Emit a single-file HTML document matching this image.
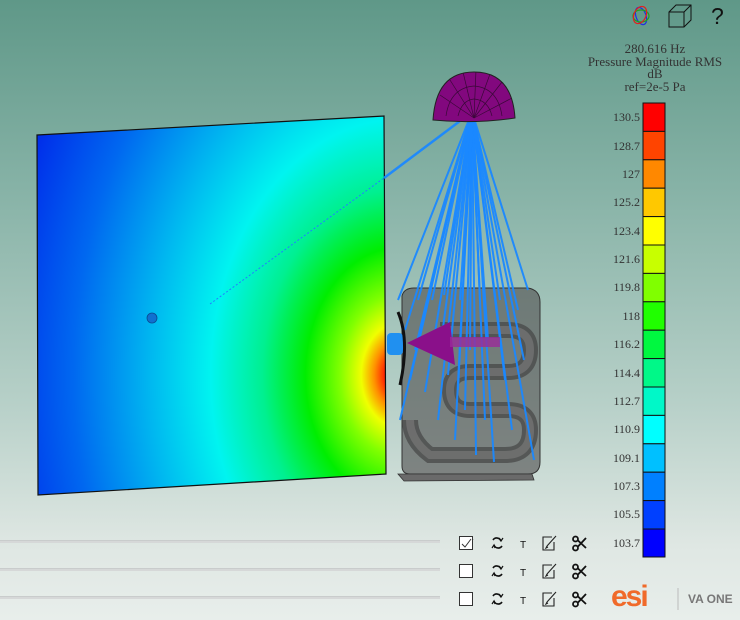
<!DOCTYPE html>
<html><head><meta charset="utf-8"><style>
html,body{margin:0;padding:0}
body{width:740px;height:620px;overflow:hidden;position:relative;font-family:"Liberation Serif",serif;
background:linear-gradient(180deg,#5f9888 0%,#86b2a6 30%,#b7d0c8 65%,#dfe7e3 88%,#e8eeeb 100%);}
.lbl{position:absolute;right:100px;font-size:12px;color:#333;text-align:right;width:60px}
.hdr{position:absolute;left:580px;width:150px;text-align:center;font-size:13px;line-height:12.5px;color:#333;top:43px}
.rowline{position:absolute;left:0;width:440px;height:2px;background:#d6d8d8;border-top:1px solid #c9cccc}
.ic{position:absolute;font-family:"DejaVu Sans",sans-serif;color:#111}
.cb{position:absolute;width:12px;height:12px;border:1px solid #333;background:#fff;left:459px}
</style></head><body>
<svg width="740" height="620" style="position:absolute;left:0;top:0">
<defs>
<radialGradient id="rg" gradientUnits="userSpaceOnUse" cx="400" cy="375" r="430" gradientTransform="translate(400 375) scale(1 1.35) translate(-400 -375)">
<stop offset="0" stop-color="#ff0000"/><stop offset="0.035" stop-color="#ff2000"/><stop offset="0.06" stop-color="#ff9000"/>
<stop offset="0.09" stop-color="#f0ff00"/><stop offset="0.14" stop-color="#80ff00"/><stop offset="0.22" stop-color="#00ee00"/>
<stop offset="0.32" stop-color="#00f090"/><stop offset="0.44" stop-color="#00f4f0"/><stop offset="0.58" stop-color="#00b8f0"/>
<stop offset="0.76" stop-color="#0068f0"/><stop offset="1" stop-color="#0018e8"/></radialGradient>
<clipPath id="hc"><path d="M433 120 Q436 72 474 72 Q512 72 515 118 Z"/></clipPath>
</defs>
<polygon points="37,135 384,116 386,474 38,495" fill="url(#rg)" stroke="#111" stroke-width="1.2"/>
<circle cx="152" cy="318" r="5" fill="#1070d0" stroke="#0a4a90" stroke-width="0.8"/>
<line x1="210" y1="304" x2="384" y2="178" stroke="#2080ff" stroke-width="1" stroke-dasharray="2,2"/>
<path d="M402 296 Q404 288 414 288 L528 288 Q540 290 540 302 L540 462 Q540 474 528 474 L410 474 Q402 474 402 466 Z" fill="rgba(85,85,85,0.65)" stroke="#333" stroke-width="1"/>
<path d="M398 474 L532 474 L534 480 L404 481 Z" fill="#6a6a6a" stroke="#333" stroke-width="0.8"/>
<path d="M440 330 L508 330 Q530 330 530 350 Q530 372 508 372 L470 372 Q450 372 450 390 Q450 410 470 410 L508 410 Q530 410 530 430 Q530 455 505 455 L430 455 Q410 440 410 420" fill="none" stroke="#444" stroke-width="16" stroke-opacity="0.7"/>
<path d="M440 330 L508 330 Q530 330 530 350 Q530 372 508 372 L470 372 Q450 372 450 390 Q450 410 470 410 L508 410 Q530 410 530 430 Q530 455 505 455 L430 455 Q410 440 410 420" fill="none" stroke="#777" stroke-width="8" stroke-opacity="0.7"/>
<g stroke="#1a88ff" stroke-width="2" stroke-opacity="0.95">
<line x1="472" y1="112" x2="384" y2="178" stroke-width="2.5"/>
<line x1="472" y1="112" x2="398" y2="300"/><line x1="472" y1="112" x2="405" y2="330"/>
<line x1="472" y1="112" x2="410" y2="380"/><line x1="472" y1="112" x2="418" y2="300"/>
<line x1="472" y1="112" x2="425" y2="392"/><line x1="472" y1="112" x2="432" y2="300"/>
<line x1="472" y1="112" x2="438" y2="420"/><line x1="472" y1="112" x2="444" y2="295"/>
<line x1="472" y1="112" x2="448" y2="375"/><line x1="472" y1="112" x2="455" y2="440"/>
<line x1="472" y1="112" x2="460" y2="300"/><line x1="472" y1="112" x2="465" y2="410"/>
<line x1="472" y1="112" x2="470" y2="350"/><line x1="472" y1="112" x2="476" y2="455"/>
<line x1="472" y1="112" x2="480" y2="300"/><line x1="472" y1="112" x2="485" y2="420"/>
<line x1="472" y1="112" x2="488" y2="340"/><line x1="472" y1="112" x2="494" y2="462"/>
<line x1="472" y1="112" x2="500" y2="300"/><line x1="472" y1="112" x2="505" y2="380"/>
<line x1="472" y1="112" x2="512" y2="430"/><line x1="472" y1="112" x2="518" y2="310"/>
<line x1="472" y1="112" x2="524" y2="360"/><line x1="472" y1="112" x2="528" y2="290"/>
<line x1="472" y1="112" x2="534" y2="460"/><line x1="472" y1="112" x2="400" y2="420"/>
<line x1="472" y1="112" x2="415" y2="350"/><line x1="472" y1="112" x2="440" y2="350"/>
<line x1="472" y1="112" x2="458" y2="390"/>
</g>
<polygon points="407,343 450,322 455,365" fill="#8a108a"/>
<rect x="450" y="337" width="50" height="10" fill="#9a2a9a" opacity="0.8"/>
<rect x="387" y="333" width="16" height="22" rx="4" fill="#2090f0"/>
<path d="M398 312 Q410 340 400 385" stroke="#111" stroke-width="3" fill="none"/>
<path d="M433 120 Q436 72 474 72 Q512 72 515 118 Q474 124 433 120 Z" fill="#82087e" stroke="#222" stroke-width="1"/>
<g clip-path="url(#hc)" stroke="#3a0838" stroke-width="0.7" fill="none">
<path d="M446 116 Q450 88 474 86 Q498 88 502 116"/><path d="M458 116 Q462 100 474 99 Q488 100 492 116"/>
<line x1="474" y1="118" x2="440" y2="95"/><line x1="474" y1="118" x2="450" y2="80"/><line x1="474" y1="118" x2="463" y2="72"/>
<line x1="474" y1="118" x2="476" y2="70"/><line x1="474" y1="118" x2="490" y2="74"/><line x1="474" y1="118" x2="502" y2="82"/>
<line x1="474" y1="118" x2="512" y2="98"/>
</g>
<g stroke="#111" stroke-width="1">
<rect x="643" y="103" width="22" height="28.4" fill="#ff0000"/><rect x="643" y="131.4" width="22" height="28.4" fill="#ff4400"/>
<rect x="643" y="159.8" width="22" height="28.4" fill="#ff8800"/><rect x="643" y="188.2" width="22" height="28.4" fill="#ffc800"/>
<rect x="643" y="216.6" width="22" height="28.4" fill="#ffff00"/><rect x="643" y="245" width="22" height="28.4" fill="#c8ff00"/>
<rect x="643" y="273.4" width="22" height="28.4" fill="#80ff00"/><rect x="643" y="301.8" width="22" height="28.4" fill="#20ff00"/>
<rect x="643" y="330.2" width="22" height="28.4" fill="#00f840"/><rect x="643" y="358.6" width="22" height="28.4" fill="#00f888"/>
<rect x="643" y="387" width="22" height="28.4" fill="#00f8c8"/><rect x="643" y="415.4" width="22" height="28.4" fill="#00ffff"/>
<rect x="643" y="443.8" width="22" height="28.4" fill="#00c0ff"/><rect x="643" y="472.2" width="22" height="28.4" fill="#0080ff"/>
<rect x="643" y="500.6" width="22" height="28.4" fill="#0040ff"/><rect x="643" y="529" width="22" height="28" fill="#0000ff"/>
</g>
<ellipse cx="641" cy="16" rx="5" ry="9" fill="none" stroke="#2030e0" stroke-width="1.2" transform="rotate(-20 641 16)"/>
<ellipse cx="641" cy="16" rx="8" ry="6" fill="none" stroke="#20a020" stroke-width="1.2"/>
<ellipse cx="640" cy="15" rx="6" ry="9" fill="none" stroke="#e02020" stroke-width="1.2" transform="rotate(25 640 15)"/>
<g fill="none" stroke="#111" stroke-width="1"><path d="M669 12 L676 5 L691 5 L691 20 L684 27 L669 27 Z M669 12 L684 12 L684 27 M684 12 L691 5"/></g>
<g fill="none" stroke="#111" stroke-width="1.6">
<g id="r1"><path d="M493 540 A4.5 4.5 0 0 1 501 541 M502 546 A4.5 4.5 0 0 1 494 545"/><path d="M499 538 L501 541 L503 538 M495 548 L494 545 L492 548" stroke-width="1.2"/></g>
<use href="#r1" y="28"/><use href="#r1" y="56"/>
<g id="e1" stroke="#222" stroke-width="1.1"><path d="M552 537 L543 537 L543 550 L554 550 L554 542"/><path d="M547 546 L556 536 M547 546 L546 548 L548 547"/></g>
<use href="#e1" y="28"/><use href="#e1" y="56"/>
<g id="s1" stroke-width="1.8"><circle cx="575.5" cy="539" r="2.5"/><circle cx="575.5" cy="548" r="2.5"/><path d="M578 540.5 L586 548 M578 546.5 L586 538"/></g>
<use href="#s1" y="28"/><use href="#s1" y="56"/>
</g>
<g fill="#111" font-family="Liberation Sans,sans-serif" font-size="10"><text x="520" y="548">T</text><text x="520" y="576">T</text><text x="520" y="604">T</text></g>
<path d="M465 543 L468 546 L473 539" stroke="#333" stroke-width="1" fill="none"/>
<line x1="678" y1="588" x2="678" y2="610" stroke="#bbb" stroke-width="1"/>
</svg>
<div class="hdr">280.616 Hz<br>Pressure Magnitude RMS<br>dB<br>ref=2e-5 Pa</div>
<div class="ic" style="left:711px;top:3px;font-size:23px;font-family:'Liberation Sans',sans-serif">?</div>
<div class="lbl" style="top:110px">130.5</div><div class="lbl" style="top:139px">128.7</div>
<div class="lbl" style="top:167px">127</div><div class="lbl" style="top:195px">125.2</div>
<div class="lbl" style="top:224px">123.4</div><div class="lbl" style="top:252px">121.6</div>
<div class="lbl" style="top:280px">119.8</div><div class="lbl" style="top:309px">118</div>
<div class="lbl" style="top:337px">116.2</div><div class="lbl" style="top:366px">114.4</div>
<div class="lbl" style="top:394px">112.7</div><div class="lbl" style="top:422px">110.9</div>
<div class="lbl" style="top:451px">109.1</div><div class="lbl" style="top:479px">107.3</div>
<div class="lbl" style="top:507px">105.5</div><div class="lbl" style="top:536px">103.7</div>
<div class="rowline" style="top:540px"></div><div class="rowline" style="top:568px"></div><div class="rowline" style="top:596px"></div>
<div class="cb" style="top:536px"></div><div class="cb" style="top:564px"></div><div class="cb" style="top:592px"></div>
<svg width="20" height="14" style="position:absolute;left:459px;top:537px"><path d="M3 7 L6 10 L12 2" stroke="#333" stroke-width="1" fill="none"/></svg>
<div style="position:absolute;left:611px;top:582px;font-family:'Liberation Sans',sans-serif;font-size:30px;font-weight:bold;color:#f06a2a;letter-spacing:-2px;line-height:30px">esi</div>
<div style="position:absolute;left:688px;top:592px;font-family:'Liberation Sans',sans-serif;font-size:12px;font-weight:bold;color:#777">VA ONE</div>
</body></html>
